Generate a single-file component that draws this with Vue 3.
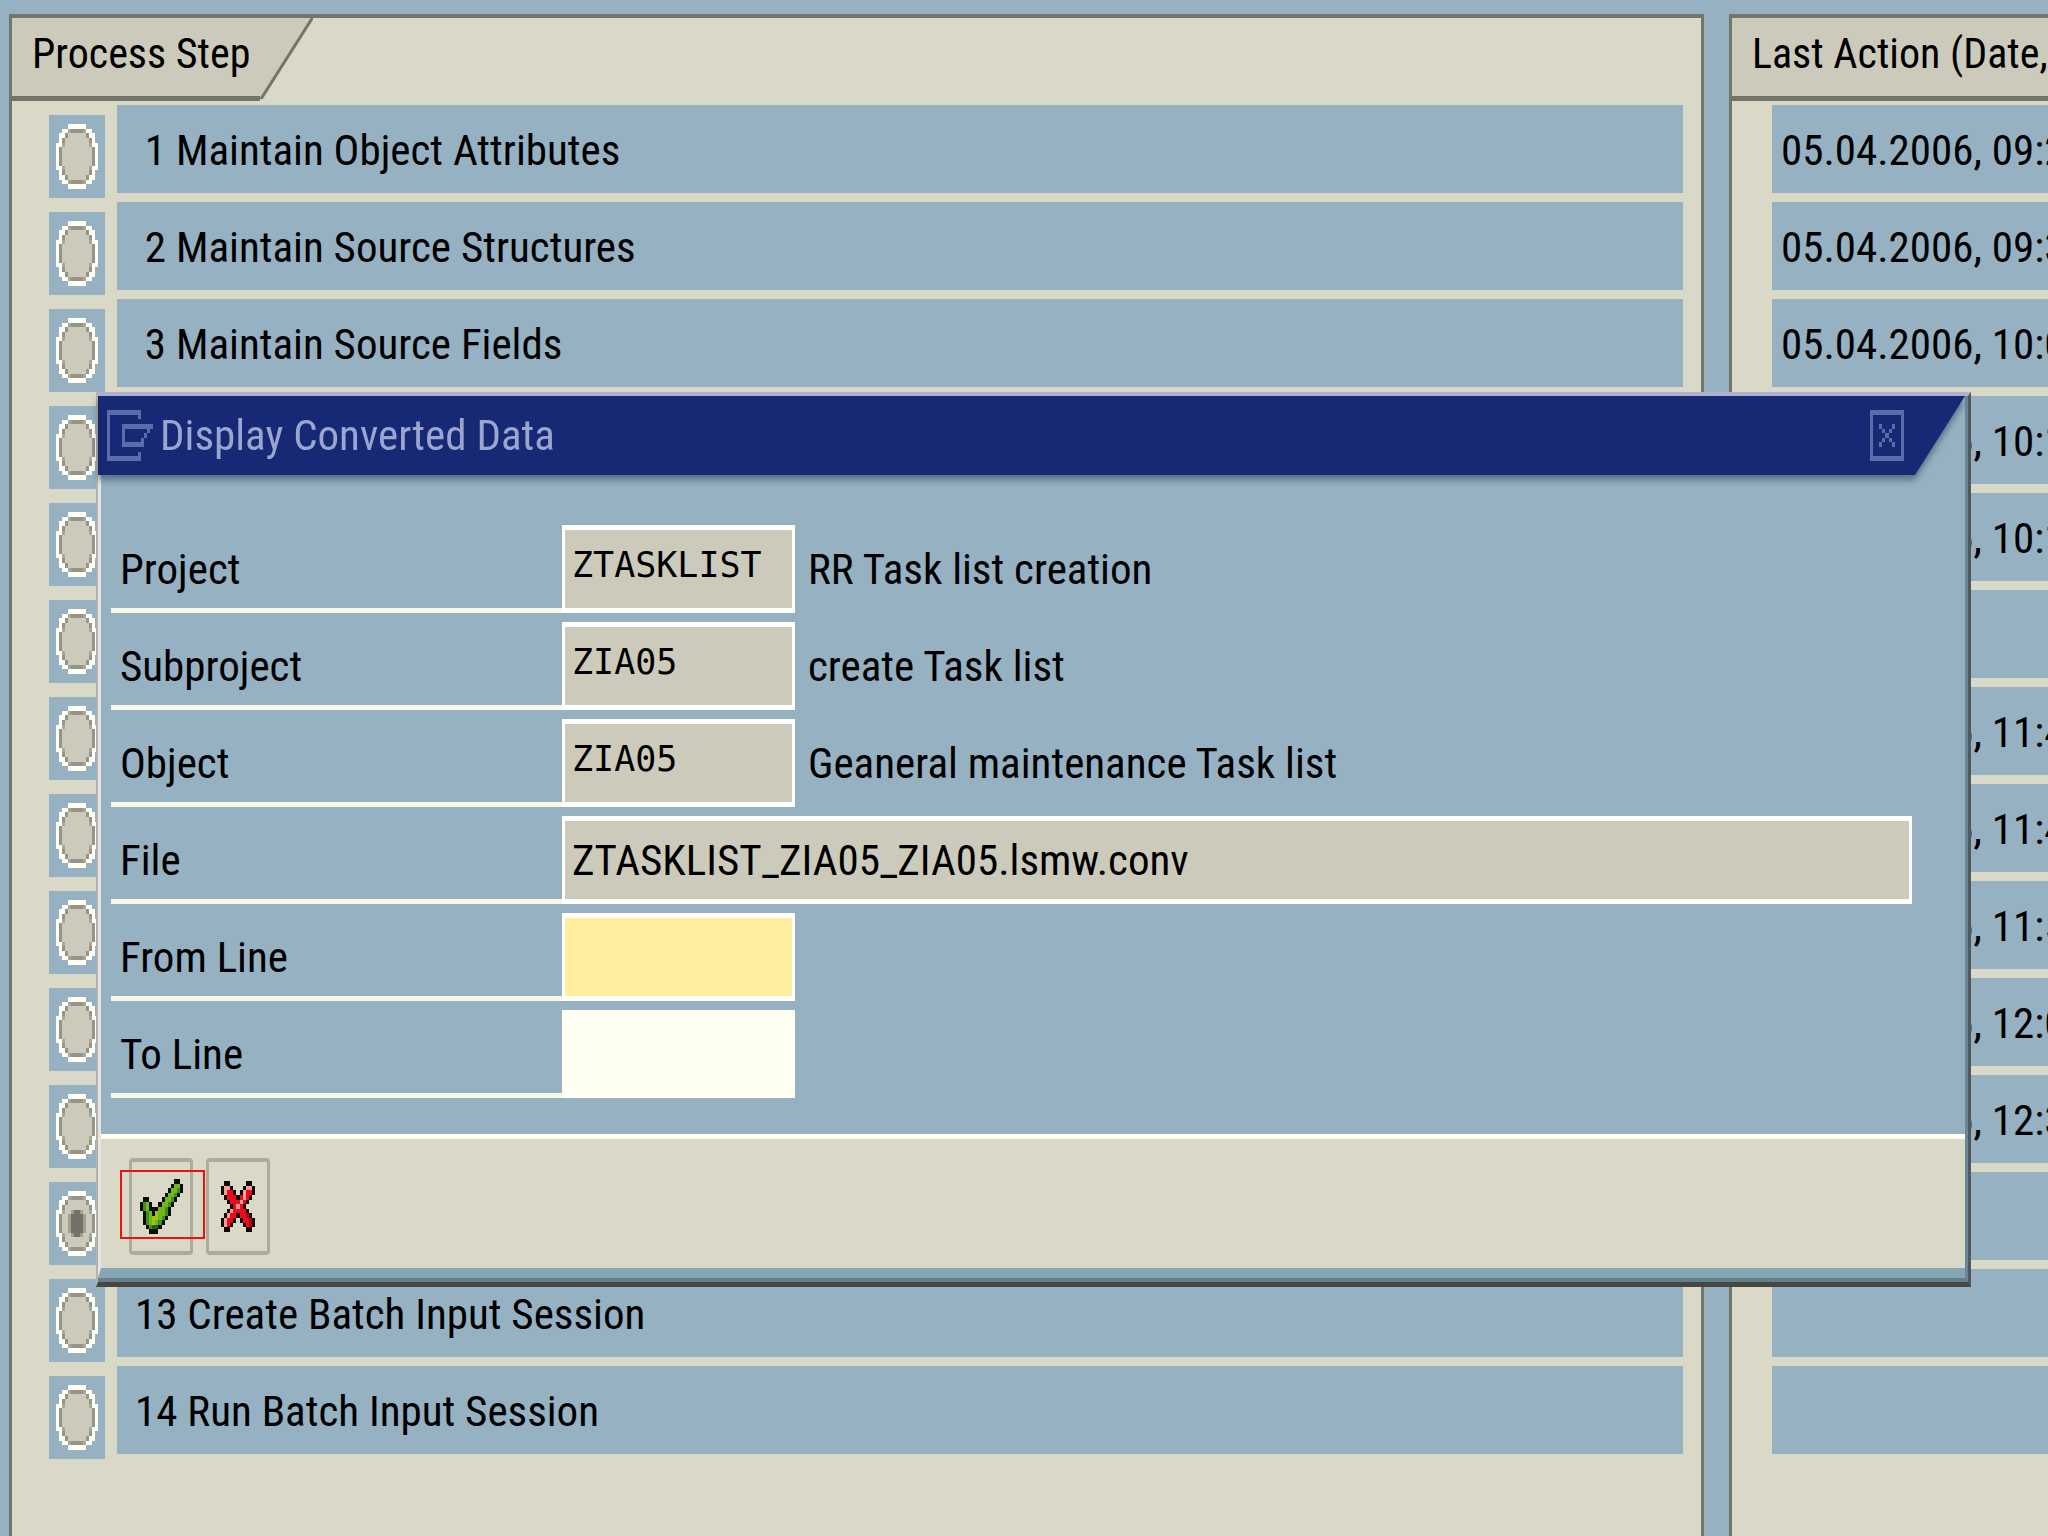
<script setup>
import { h, ref } from "vue";

const steps = [
    { id: 1, text: " 1 Maintain Object Attributes", date: "05.04.2006, 09:2" },
    { id: 2, text: " 2 Maintain Source Structures", date: "05.04.2006, 09:3" },
    { id: 3, text: " 3 Maintain Source Fields", date: "05.04.2006, 10:0" },
    { id: 4, text: "", date: "05.04.2006, 10:1" },
    { id: 5, text: "", date: "05.04.2006, 10:1" },
    { id: 6, text: "", date: "" },
    { id: 7, text: "", date: "05.04.2006, 11:4" },
    { id: 8, text: "", date: "05.04.2006, 11:4" },
    { id: 9, text: "", date: "05.04.2006, 11:5" },
    { id: 10, text: "", date: "05.04.2006, 12:0" },
    { id: 11, text: "", date: "05.04.2006, 12:3" },
    { id: 12, text: "", date: "" },
    { id: 13, text: "13 Create Batch Input Session", date: "" },
    { id: 14, text: "14 Run Batch Input Session", date: "" },
];

const currentStep = ref(12);
const open = ref(true);
const fromLine = ref("");
const toLine = ref("");

const fields = [
    { id: "project", label: "Project", value: "ZTASKLIST", text: "RR Task list creation" },
    { id: "subproject", label: "Subproject", value: "ZIA05", text: "create Task list" },
    { id: "object", label: "Object", value: "ZIA05", text: "Geaneral maintenance Task list" },
];

const palette = {
    w: "#fffff4",
    n: "#a8a798",
    N: "#94948a",
    f: "#cccabb",
    o: "#a09f92",
    D: "#727269",
    k: "#0a0a06",
    l: "#72b81c",
    g: "#3f8f1c",
    y: "#9cc414",
    d: "#245e16",
    p: "#ff9c9c",
    r: "#ee0a1c",
    m: "#b00014",
    b: "#5c6cab",
};

const radioOff = [
    "....wwwwww....",
    "..wwnNNNNnww..",
    ".wwNffffffNww.",
    ".wNffffffffNw.",
    "wwnffffffffnww",
    "wNffffffffffNw",
    "wNffffffffffNw",
    "wNffffffffffNw",
    "wNffffffffffNw",
    "wwnffffffffnww",
    ".wNffffffffNw.",
    ".wwNffffffNww.",
    "..wwnNNNNnww..",
    "....wwwwww....",
];

const radioOn = radioOff.map((row, i) => {
    if (i < 4 || i > 9) return row;
    const dot = i === 4 || i === 9 ? "foDDof" : "oDDDDo";
    return row.slice(0, 4) + dot + row.slice(10);
});

const checkIcon = [
    "...........kk.",
    "..........kllk",
    ".........kllgk",
    "........kllgk.",
    ".kk....kllgk..",
    "kglk..kllgk...",
    "kglkkkllgk....",
    ".kglkyllgk....",
    ".kglyylgk.....",
    ".kglylgk......",
    "..kgddk.......",
    "...kkk........",
];

const cancelIcon = [
    ".kk.....kk.",
    "kppk...kppk",
    "kprrk.kprrk",
    ".krrrkrprk.",
    "..krrrprk..",
    "...krprk...",
    "..kprrrrk..",
    ".kprrkrrmk.",
    "kprrk.krrmk",
    "kprk...krmk",
    ".kk.....kk.",
];

const windowIcon = [
    "bbbbbbbbbbb....",
    "b.........b....",
    "b..............",
    "b....bbbbbbbbbb",
    "b....b.......b.",
    "b....b......b..",
    "b....b.....b...",
    "b....bbbbbbb...",
    "b..............",
    "b.........b....",
    "bbbbbbbbbbb....",
];

const closeIcon = [
    "bbbbbbbbbbb",
    "b.........b",
    "b.........b",
    "b..b...b..b",
    "b...b.b...b",
    "b....b....b",
    "b...b.b...b",
    "b..b...b..b",
    "b.........b",
    "b.........b",
    "bbbbbbbbbbb",
];

// one rect per lit cell, the css size stretches the grid
const PixelIcon = (props) =>
    h(
        "svg",
        {
            viewBox: `0 0 ${props.rows[0].length} ${props.rows.length}`,
            preserveAspectRatio: "none",
            "shape-rendering": "crispEdges",
            "aria-hidden": "true",
        },
        props.rows.flatMap((row, y) =>
            [...row]
                .map((c, x) => (c === "." ? null : h("rect", { x, y, width: 1, height: 1, fill: palette[c] })))
                .filter(Boolean)
        )
    );
PixelIcon.props = ["rows"];
</script>

<template>
    <main class="page">
        <section class="panel">
            <header class="panel-head">
                <h2 class="tab">Process Step</h2>
                <svg class="tab-edge" viewBox="0 0 53 82" aria-hidden="true">
                    <polygon points="0,0 53,0 1,82 0,82" fill="#cccabb" />
                    <line x1="53" y1="-1" x2="1" y2="81" stroke="#73756a" stroke-width="3" />
                </svg>
            </header>
            <ul class="steps">
                <li v-for="step in steps" :key="step.id" class="step">
                    <span class="radio">
                        <input
                            :id="`step-${step.id}`"
                            v-model="currentStep"
                            type="radio"
                            name="step"
                            :value="step.id"
                            :aria-label="`Step ${step.id}`"
                        />
                        <PixelIcon class="radio-face" :rows="currentStep === step.id ? radioOn : radioOff" />
                    </span>
                    <label class="cell step-text" :for="`step-${step.id}`">{{ step.text }}</label>
                </li>
            </ul>
        </section>

        <section class="panel panel-right">
            <header class="panel-head panel-head-full">
                <h2 class="tab">Last Action (Date,</h2>
            </header>
            <ul class="steps dates">
                <li v-for="step in steps" :key="step.id" class="date-row">
                    <span class="cell date">{{ step.date }}</span>
                </li>
            </ul>
        </section>

        <div v-if="open" class="dialog" role="dialog" aria-labelledby="dialog-title">
            <div class="frame">
                <div class="title-shadow">
                    <div class="title-bar">
                        <PixelIcon class="window-icon" :rows="windowIcon" />
                        <h1 id="dialog-title">Display Converted Data</h1>
                        <button class="close" type="button" aria-label="Close" @click="open = false">
                            <PixelIcon class="close-icon" :rows="closeIcon" />
                        </button>
                    </div>
                </div>
                <div class="body">
                    <form class="form" @submit.prevent>
                        <div v-for="field in fields" :key="field.id" class="row">
                            <label :for="field.id">{{ field.label }}</label>
                            <input :id="field.id" class="mono" type="text" :value="field.value" readonly />
                            <span class="text">{{ field.text }}</span>
                        </div>
                        <div class="row">
                            <label for="file">File</label>
                            <input id="file" class="wide" type="text" value="ZTASKLIST_ZIA05_ZIA05.lsmw.conv" readonly />
                        </div>
                        <div class="row">
                            <label for="from">From Line</label>
                            <input id="from" v-model="fromLine" class="mono active" type="text" />
                        </div>
                        <div class="row">
                            <label for="to">To Line</label>
                            <input id="to" v-model="toLine" class="mono empty" type="text" />
                        </div>
                    </form>
                    <footer class="actions">
                        <button class="action marked" type="button" aria-label="Continue">
                            <PixelIcon class="check-icon" :rows="checkIcon" />
                        </button>
                        <button class="action" type="button" aria-label="Cancel" @click="open = false">
                            <PixelIcon class="cancel-icon" :rows="cancelIcon" />
                        </button>
                    </footer>
                </div>
            </div>
        </div>
    </main>
</template>

<style>
body {
    background: #95b1c2;
}
</style>

<style scoped>
.page {
    position: relative;
    box-sizing: border-box;
    min-height: 100vh;
    padding: 14px 0 0 9px;
    display: grid;
    grid-template-columns: minmax(0, 1695fr) minmax(0, 319fr);
    gap: 25px;
    overflow: hidden;
    background: #95b1c2;
    color: #000;
    font-family: "Roboto Condensed", "Liberation Sans", sans-serif;
    font-size: 43px;
}

.page * {
    box-sizing: border-box;
}

.panel {
    border: 3px solid #73756a;
    border-top-width: 4px;
    border-bottom: none;
    background: #dad8c6;
    white-space: nowrap;
}

.panel-right {
    border-right: none;
    overflow: hidden;
}

.panel-head {
    display: flex;
    height: 83px;
}

.panel-head-full {
    background: #cccabb;
    border-bottom: 5px solid #73756a;
}

.tab {
    margin: 0;
    padding: 0 0 0 20px;
    min-width: 248px;
    font-size: 42px;
    font-weight: 400;
    line-height: 72px;
    background: #cccabb;
    border-bottom: 5px solid #73756a;
}

.panel-head-full .tab {
    border-bottom: none;
}

.tab-edge {
    width: 53px;
    height: 82px;
}

.steps {
    list-style: none;
    margin: 0;
    padding: 4px 18px 0 37px;
}

.step {
    display: flex;
    align-items: flex-start;
    gap: 12px;
    height: 97px;
}

.radio {
    position: relative;
    display: flex;
    align-items: center;
    justify-content: center;
    width: 56px;
    height: 83px;
    margin-top: 10px;
    background: #95b1c2;
}

.radio input {
    position: absolute;
    inset: 0;
    width: 100%;
    height: 100%;
    margin: 0;
    opacity: 0;
    cursor: pointer;
}

.radio-face {
    width: 42px;
    height: 65px;
}

.cell {
    display: block;
    height: 88px;
    line-height: 90px;
    background: #95b1c2;
    white-space: pre;
}

.step-text {
    flex: 1;
    padding-left: 18px;
}

.dates {
    padding: 4px 0 0 40px;
}

.date-row {
    height: 97px;
}

.date {
    padding-left: 9px;
}

.dialog {
    position: absolute;
    left: 96px;
    right: 77px;
    top: 392px;
    border-style: solid;
    border-width: 4px 3px 5px 2px;
    border-color: #aeb3d2 #50595c #454740 #b4b2a4;
    background: #95b1c2;
}

.frame {
    border-right: 3px solid #6a8799;
    border-bottom: 4px solid #64808f;
}

.title-shadow {
    position: relative;
    filter: drop-shadow(0 5px 3px rgba(60, 90, 110, 0.7));
}

.title-bar {
    display: flex;
    align-items: center;
    height: 79px;
    padding: 0 61px 0 9px;
    background: #172874;
    clip-path: polygon(0 0, 100% 0, calc(100% - 50px) 100%, 0 100%);
}

.title-bar h1 {
    flex: 1;
    margin: 0 0 0 7px;
    font-size: 43px;
    font-weight: 400;
    line-height: 79px;
    color: #9aa5d0;
}

.window-icon {
    width: 46px;
    height: 51px;
}

.close {
    display: flex;
    padding: 0;
    border: none;
    background: none;
    cursor: pointer;
}

.close-icon {
    width: 34px;
    height: 51px;
}

.body {
    border-left: 3px solid #e4e5ea;
    border-bottom: 10px solid #86a6b5;
}

.form {
    display: flex;
    flex-direction: column;
    gap: 9px;
    padding: 50px 53px 36px 10px;
}

.row {
    display: flex;
    height: 88px;
    line-height: 88px;
    white-space: nowrap;
}

.row label {
    width: 451px;
    padding-left: 9px;
    border-bottom: 5px solid #f8f7e6;
}

.row input {
    width: 233px;
    margin: 0;
    padding: 0 0 0 7px;
    border: 3px solid #fff;
    border-width: 5px 3px;
    border-radius: 0;
    outline: none;
    background: #cccabb;
    color: #000;
    font: inherit;
}

.row .mono {
    padding-bottom: 8px;
    font-family: "DejaVu Sans Mono", "Liberation Mono", monospace;
    font-size: 35px;
}

.row .wide {
    flex: 1;
}

.row .active {
    background: #ffee9e;
}

.row .empty {
    background: #fffff2;
    border-color: #fffff2;
}

.text {
    padding-left: 13px;
}

.actions {
    display: flex;
    gap: 13px;
    padding: 19px 28px 13px;
    border-top: 5px solid #fffff2;
    background: #dad8c6;
}

.action {
    position: relative;
    display: flex;
    align-items: center;
    justify-content: center;
    width: 64px;
    height: 97px;
    padding: 0;
    border: 3px solid #aeab9b;
    border-width: 4px 3px;
    border-radius: 4px;
    background: none;
    cursor: pointer;
}

/* red frame round the confirm button */
.marked::after {
    content: "";
    position: absolute;
    left: -12px;
    top: 8px;
    width: 81px;
    height: 65px;
    border: 2px solid #f01010;
}

.check-icon {
    width: 43px;
    height: 55px;
}

.cancel-icon {
    width: 34px;
    height: 51px;
}
</style>
